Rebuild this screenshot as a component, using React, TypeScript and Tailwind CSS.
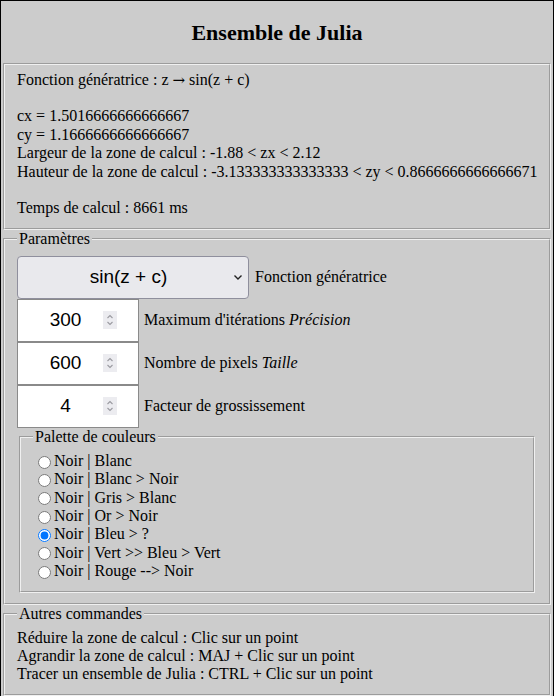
const fieldset = "mx-[2px] border-2 [border-style:groove] border-[#f0f0f0] px-3 pt-[5.6px] pb-[10px] min-w-0";
const legend = "px-[2px]";

const palettes = [
  "Noir | Blanc",
  "Noir | Blanc > Noir",
  "Noir | Gris > Blanc",
  "Noir | Or > Noir",
  "Noir | Bleu > ?",
  "Noir | Vert >> Bleu > Vert",
  "Noir | Rouge --> Noir",
];

function Spinner() {
  return (
    <span className="flex h-[18px] w-[14px] items-center justify-center bg-[#ececf0]">
      <svg width="10" height="14" viewBox="0 0 10 14" fill="none" stroke="#9a9aa0" strokeWidth="1.1">
        <path d="M2.5 5 L5 2.5 L7.5 5" />
        <path d="M2.5 9 L5 11.5 L7.5 9" />
      </svg>
    </span>
  );
}

function NumberField({ value, children }: { value: string; children: React.ReactNode }) {
  return (
    <div className="flex items-center">
      <div className="flex h-[43px] w-[122px] items-center border border-[#8a8a8a] bg-white pl-[10px] pr-[21px] font-['Liberation_Sans',Arial,sans-serif] text-[19px]">
        <span className="flex-1 text-center">{value}</span>
        <Spinner />
      </div>
      <span className="ml-[5px]">{children}</span>
    </div>
  );
}

export default function App() {
  return (
    <div className="border border-black bg-[#cccccc] font-['Liberation_Serif','Times_New_Roman',serif] text-[16px] leading-[18.4px] text-black">
      <div className="flex h-[62px] items-center justify-center pt-[1px]">
        <h1 className="text-[22px] font-bold leading-[25px]">Ensemble de Julia</h1>
      </div>

      <fieldset className={fieldset}>
        <div>
          Fonction génératrice : z <span className="font-['DejaVu_Serif',serif] text-[15px]">→</span> sin(z + c)
        </div>
        <br />
        <div>cx = 1.5016666666666667</div>
        <div>cy = 1.1666666666666667</div>
        <div>Largeur de la zone de calcul : -1.88 &lt; zx &lt; 2.12</div>
        <div className="whitespace-nowrap">
          Hauteur de la zone de calcul : -3.133333333333333 &lt; zy &lt; 0.8666666666666671
        </div>
        <br />
        <div>Temps de calcul : 8661 ms</div>
      </fieldset>

      <fieldset className={fieldset}>
        <legend className={legend}>Paramètres</legend>
        <div className="mt-[2px] flex items-center">
          <div className="flex h-[43px] w-[232px] items-center rounded-[4px] border border-[#8f8f9d] bg-[#e9e9ed] pr-[5px] font-['Liberation_Sans',Arial,sans-serif] text-[19px]">
            <span className="flex-1 pl-[6px] text-center">sin(z + c)</span>
            <svg width="10" height="8" viewBox="0 0 10 8" fill="none" stroke="#222" strokeWidth="1.4">
              <path d="M1.5 2.5 L5 6 L8.5 2.5" />
            </svg>
          </div>
          <span className="ml-[6px]">Fonction génératrice</span>
        </div>
        <NumberField value="300">
          Maximum d'itérations <i>Précision</i>
        </NumberField>
        <NumberField value="600">
          Nombre de pixels <i>Taille</i>
        </NumberField>
        <NumberField value="4">Facteur de grossissement</NumberField>

        <fieldset className={fieldset}>
          <legend className={legend}>Palette de couleurs</legend>
          {palettes.map((p, i) => (
            <label key={p} className="flex h-[18.4px] items-center">
              <input
                type="radio"
                name="palette"
                defaultChecked={i === 4}
                className="ml-[5px] mr-[3px] mt-[2px] h-[13px] w-[13px]"
              />
              {p}
            </label>
          ))}
        </fieldset>
      </fieldset>

      <fieldset className={fieldset}>
        <legend className={legend}>Autres commandes</legend>
        <div>Réduire la zone de calcul : Clic sur un point</div>
        <div>Agrandir la zone de calcul : MAJ + Clic sur un point</div>
        <div>Tracer un ensemble de Julia : CTRL + Clic sur un point</div>
      </fieldset>
    </div>
  );
}
